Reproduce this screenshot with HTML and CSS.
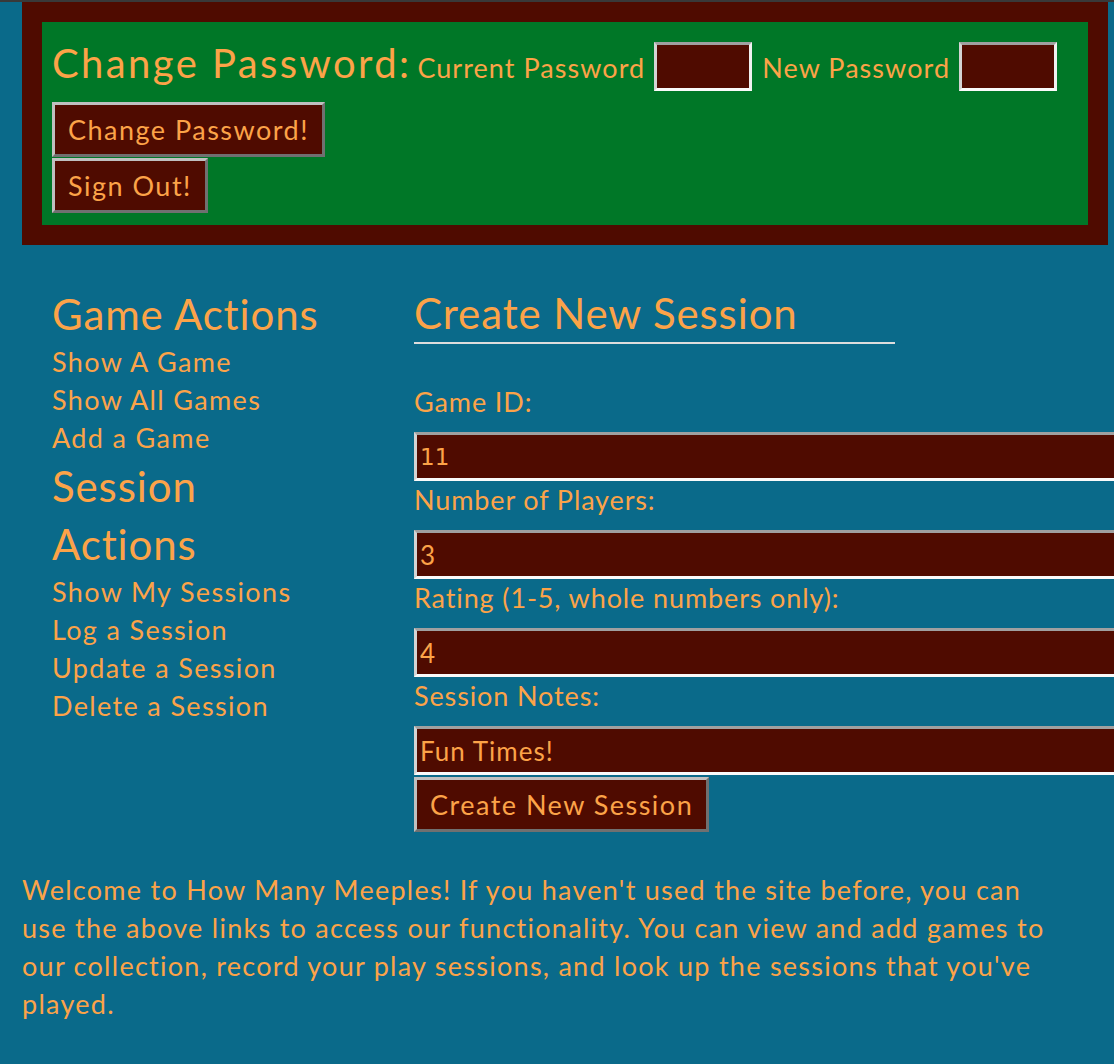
FILE: index.html
```html
<!DOCTYPE html>
<html>
<head>
<meta charset="utf-8">
<title>How Many Meeples</title>
<link rel="stylesheet" href="styles.css">
</head>
<body>
<header class="account">
  <div class="pw-row">
    <h2 class="pw-title">Change Password:</h2>
    <label class="pw-label">Current Password</label>
    <input class="pw-input" type="password">
    <label class="pw-label">New Password</label>
    <input class="pw-input" type="password">
  </div>
  <button class="btn">Change Password!</button>
  <button class="btn">Sign Out!</button>
</header>
<main class="main">
  <nav class="nav">
    <h2 class="nav-title">Game Actions</h2>
    <a class="nav-link">Show A Game</a>
    <a class="nav-link">Show All Games</a>
    <a class="nav-link">Add a Game</a>
    <h2 class="nav-title">Session Actions</h2>
    <a class="nav-link">Show My Sessions</a>
    <a class="nav-link">Log a Session</a>
    <a class="nav-link">Update a Session</a>
    <a class="nav-link">Delete a Session</a>
  </nav>
  <section class="form">
    <h2 class="form-title">Create New Session</h2>
    <label class="field-label first">Game ID:</label>
    <input class="field num" type="text" value="11">
    <label class="field-label">Number of Players:</label>
    <input class="field" type="text" value="3">
    <label class="field-label">Rating (1-5, whole numbers only):</label>
    <input class="field" type="text" value="4">
    <label class="field-label">Session Notes:</label>
    <input class="field notes" type="text" value="Fun Times!">
    <button class="btn submit">Create New Session</button>
  </section>
</main>
<p class="welcome">Welcome to How Many Meeples! If you haven't used the site before, you can use the above links to access our functionality. You can view and add games to our collection, record your play sessions, and look up the sessions that you've played.</p>
</body>
</html>
```
FILE: styles.css
```css
html, body {
  overflow-x: hidden;
}
body {
  margin: 0;
  border-top: 2px solid #393939;
  background: #0a6a8a;
  color: #fca348;
  font-family: Lato, "Open Sans", sans-serif;
  letter-spacing: 0.055em;
  min-height: 1062px;
}
.account {
  margin: 0 6px 0 22px;
  border: 20px solid #4f0b00;
  background: #007727;
  padding: 20px 10px 11px 10px;
}
.pw-row {
  display: flex;
  align-items: center;
  height: 49px;
  margin-bottom: 11px;
  white-space: nowrap;
}
.pw-row > * {
  flex-shrink: 0;
}
.pw-title {
  margin: 0 6px 0 0;
  font-weight: 400;
  font-size: 40px;
  line-height: 49px;
  letter-spacing: 0.06em;
  position: relative;
  top: -3px;
}
.pw-label {
  font-size: 27px;
  letter-spacing: 1.05px;
  margin-right: 9px;
  padding-top: 2px;
}
.pw-input {
  box-sizing: border-box;
  width: 98px;
  height: 49px;
  margin: 0 10px 0 0;
  background: #4f0b00;
  border-style: solid;
  border-width: 3px;
  border-color: #a0a0a0 #f0f0f0 #fafafa #d4d4d4;
  padding: 0;
}
.btn {
  display: block;
  box-sizing: border-box;
  height: 55px;
  margin: 0 0 1px 0;
  padding: 0 13px;
  background: #4f0b00;
  color: #fca348;
  font-family: Lato, "Open Sans", sans-serif;
  font-size: 27px;
  letter-spacing: 0.055em;
  border-style: solid;
  border-width: 3px;
  border-color: #c0c0c0 #707070 #707070 #c0c0c0;
}
.main {
  display: flex;
  padding: 40px 0 0 52px;
}
.nav {
  width: 290px;
  flex-shrink: 0;
  margin-right: 72px;
  display: flex;
  flex-direction: column;
}
.nav-title {
  margin: 0;
  font-weight: 400;
  font-size: 42px;
  line-height: 58px;
}
.nav-link {
  font-size: 27px;
  line-height: 38px;
  letter-spacing: 0.05em;
}
.form {
  display: flex;
  flex-direction: column;
  align-items: flex-start;
}
.form-title {
  margin: 0;
  width: 481px;
  font-weight: 400;
  font-size: 42px;
  line-height: 57px;
  border-bottom: 2px solid #dddddd;
}
.field-label {
  font-size: 27px;
  line-height: 38px;
}
.field-label.first {
  margin-top: 39px;
}
.field {
  box-sizing: border-box;
  width: 760px;
  height: 49px;
  margin: 11px 0 0 0;
  background: #4f0b00;
  color: #fca348;
  font-family: Lato, "Open Sans", sans-serif;
  font-size: 26px;
  letter-spacing: 0.04em;
  padding: 0 3px;
  border-style: solid;
  border-width: 3px;
  border-color: #a0a0a0 #f0f0f0 #fafafa #d4d4d4;
}
.field.num {
  font-family: "DejaVu Sans", sans-serif;
  font-size: 23px;
  letter-spacing: 0;
}
.submit {
  margin-top: 2px;
}
.welcome {
  margin: 38px 0 0 22px;
  width: 1040px;
  font-size: 27px;
  line-height: 38px;
  letter-spacing: 0.047em;
}
```
